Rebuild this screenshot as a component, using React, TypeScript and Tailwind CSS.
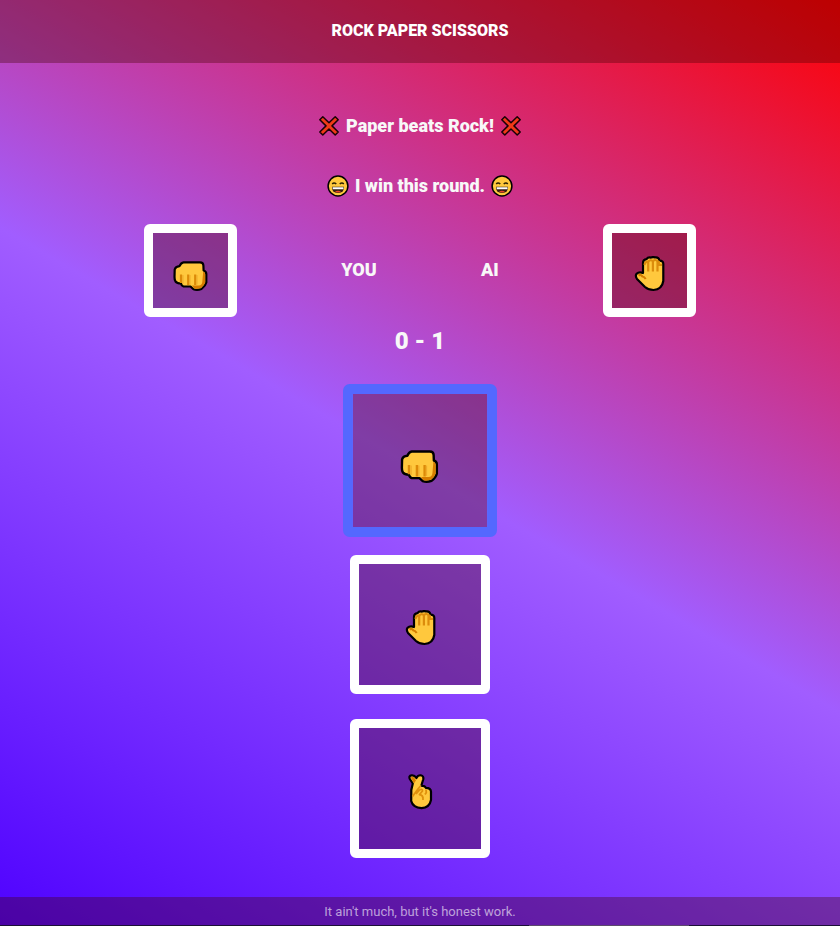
import React, { useState } from "react";
import clsx from "clsx";

type Move = "rock" | "paper" | "scissors";

function Fist() {
  return (
    <svg viewBox="0 0 36 36" className="size-9" aria-hidden="true">
      <path
        d="M1.700 13.500Q2.500 10.500 6.500 10.200Q8 6.500 10.500 6.300H27Q30.300 6.300 30.400 9.500L30.600 14.500Q33.300 15.500 33.300 18V26.500Q32.400 30 28.500 33Q24 34.500 20.500 33.200L17.500 30.500H10.500Q8.500 30 8 27.500Q4 27.500 2.500 25.500Q1.500 24 1.500 21Z"
        fill="#ffc83d"
        stroke="#000"
        strokeWidth="2.200"
        strokeLinejoin="round"
      />
      <path
        d="M30.200 15.500Q32.200 16.500 32.200 18.500V26.500Q31.200 29.500 28 32Q24 33.400 21 32.200L19 29.500H26Q29 29.300 29.300 26Z"
        fill="#d67d00"
      />
      <path
        d="M8 18.500V27M15.200 18.500V29M22.200 18.500V29"
        stroke="#dc8a08"
        strokeWidth="2.200"
        fill="none"
      />
      <path d="M9.900 19V27.500M16.900 19V29M23.900 19V28.500" stroke="#efac2a" strokeWidth="1.200" fill="none" />
    </svg>
  );
}

function Hand() {
  return (
    <svg viewBox="0 0 36 36" className="size-9" aria-hidden="true">
      <path
        d="M12 17V7Q12 3.500 15.500 3.200Q17 .800 20 1.600Q22 .600 24 1.400Q27.500 .700 28.600 4.600Q32.300 4.600 32.300 8V25Q31 33.500 22.500 34Q17.500 34 14 31L6 23Q4 20 5.500 17.800Q8 15.600 12 17Z"
        fill="#ffc83d"
        stroke="#000"
        strokeWidth="2.200"
        strokeLinejoin="round"
      />
      <path
        d="M13.500 9Q14 5.200 17.200 5.800Q19.500 3 21.900 5.200Q24.500 2.800 26.500 5.200L27.800 5.800V8M17.200 5.800V15.500M21.900 5V15.500M26.500 5V15.500M27.500 8.800H31"
        stroke="#dc8c0c"
        strokeWidth="2.200"
        fill="none"
      />
      <path d="M7.500 19.500Q9.500 18 11.500 20.500Q13 20.500 14.700 23" stroke="#d67d00" strokeWidth="2.200" fill="none" />
    </svg>
  );
}

function CrossedFingers() {
  return (
    <svg viewBox="0 0 36 36" className="size-9" aria-hidden="true">
      <path
        d="M9.300 16L10.800 9.500L7.800 5Q6.500 1.800 9.500 1.400Q12.500 1 14.400 4Q16 1 18.800 1.300Q22 2 21.200 5.500L19.200 12Q22.500 11.500 24 13.800Q28.800 13.800 29 17.500V26Q27.500 33.800 19.500 34.100Q11 33.600 9.200 27Z"
        fill="#ffc83d"
        stroke="#000"
        strokeWidth="2.200"
        strokeLinejoin="round"
      />
      <path d="M8.900 3.800Q10 1.800 12 3.500L14 6.200L12 9.500Z" fill="#d67d00" />
      <path
        d="M19 11.500L16 15L10.500 22.500M14 20L17.500 16Q20.500 14.500 20.500 17L17.500 20.500Q21.500 21 21 26M24 15.500L24.300 18.500L23 20.500"
        stroke="#df900c"
        strokeWidth="1.800"
        fill="none"
        strokeLinejoin="round"
      />
    </svg>
  );
}

function Cross() {
  return (
    <svg viewBox="0 0 22 22" className="size-[22px]" aria-hidden="true">
      <path
        d="M4.800 1.800L11 7.800L17.200 1.800L20.200 4.800L14 10.900L20.200 17L17.200 20L11 14L4.800 20L1.800 17L8 10.900L1.800 4.800Z"
        fill="#f03a17"
        stroke="#1a0008"
        strokeWidth="1.500"
        strokeLinejoin="round"
      />
    </svg>
  );
}

function Grin() {
  return (
    <svg viewBox="0 0 22 22" className="size-[22px]" aria-hidden="true">
      <circle cx="11" cy="11" r="9.900" fill="#ffc83d" stroke="#000" strokeWidth="1.500" />
      <path d="M5.200 9Q7 7 9.300 9M12.700 9Q15 7 16.800 9" stroke="#2b2200" strokeWidth="1.500" fill="none" />
      <path d="M5 11.800H17Q17.500 18 11 18Q4.500 18 5 11.800Z" fill="#321e10" />
      <path d="M5.500 12.300H16.500V14.300H5.800Z" fill="#fff" />
      <path d="M8 16.500Q11 14.800 14 16.500Q11 18.500 8 16.500Z" fill="#e8442a" />
    </svg>
  );
}

const icons: Record<Move, React.ReactNode> = {
  rock: <Fist />,
  paper: <Hand />,
  scissors: <CrossedFingers />,
};

const moves: Move[] = ["rock", "paper", "scissors"];

function Played({ move }: { move: Move }) {
  return (
    <div className="flex size-[93px] items-center justify-center rounded-md border-9 border-white bg-[#420000]/35 bg-clip-padding pt-1.5">
      {icons[move]}
    </div>
  );
}

function Message({ icon, children }: { icon: React.ReactNode; children: React.ReactNode }) {
  return (
    <p className="flex items-center justify-center gap-1.5 text-lg leading-6 font-black">
      {icon}
      {children}
      {icon}
    </p>
  );
}

export default function App() {
  const [selected, setSelected] = useState<Move>("rock");

  return (
    <div className="flex min-h-screen flex-col bg-[linear-gradient(30deg,#4d00ff,#a15dff,#ff0000)] bg-[length:100%_calc(100%+14px)] font-[Roboto,sans-serif] text-[#f8f8f8]">
      <header className="flex h-[63px] items-center justify-center bg-[#420000]/35 pb-0.5">
        <h1 className="text-base leading-6 font-black text-white">ROCK PAPER SCISSORS</h1>
      </header>

      <main className="flex flex-1 flex-col pt-[51px] pb-8">
        <div className="flex flex-col gap-9">
          <Message icon={<Cross />}>Paper beats Rock!</Message>
          <Message icon={<Grin />}>I win this round.</Message>
        </div>

        <section className="mt-[26px] flex items-center justify-between px-36 text-lg leading-6 font-black">
          <Played move="rock" />
          <h2 className="pb-0.5">YOU</h2>
          <h2 className="pb-0.5">AI</h2>
          <Played move="paper" />
        </section>

        <p className="mt-2 text-center text-2xl font-black">0 - 1</p>

        <section className="mt-[34px] flex flex-col items-center gap-[25px]">
          {moves.map((move) => (
            <button
              key={move}
              type="button"
              aria-label={move}
              aria-pressed={selected === move}
              onClick={() => setSelected(move)}
              className={clsx(
                "flex h-[139px] w-[140px] items-center justify-center rounded-md border-9 bg-[#420000]/35 bg-clip-padding pt-1.5",
                selected === move ? "scale-110 border-[#5468ff]" : "border-white"
              )}
            >
              {icons[move]}
            </button>
          ))}
        </section>
      </main>

      <footer className="bg-[#420000]/35 text-center text-[13px] text-white/60">
        <p className="pt-0.5 leading-[26px]">It ain't much, but it's honest work.</p>
        <div className="flex h-px bg-[#1c1038]">
          <div className="ml-[63%] w-[19%] bg-[#5c4a6c]" />
        </div>
      </footer>
    </div>
  );
}
